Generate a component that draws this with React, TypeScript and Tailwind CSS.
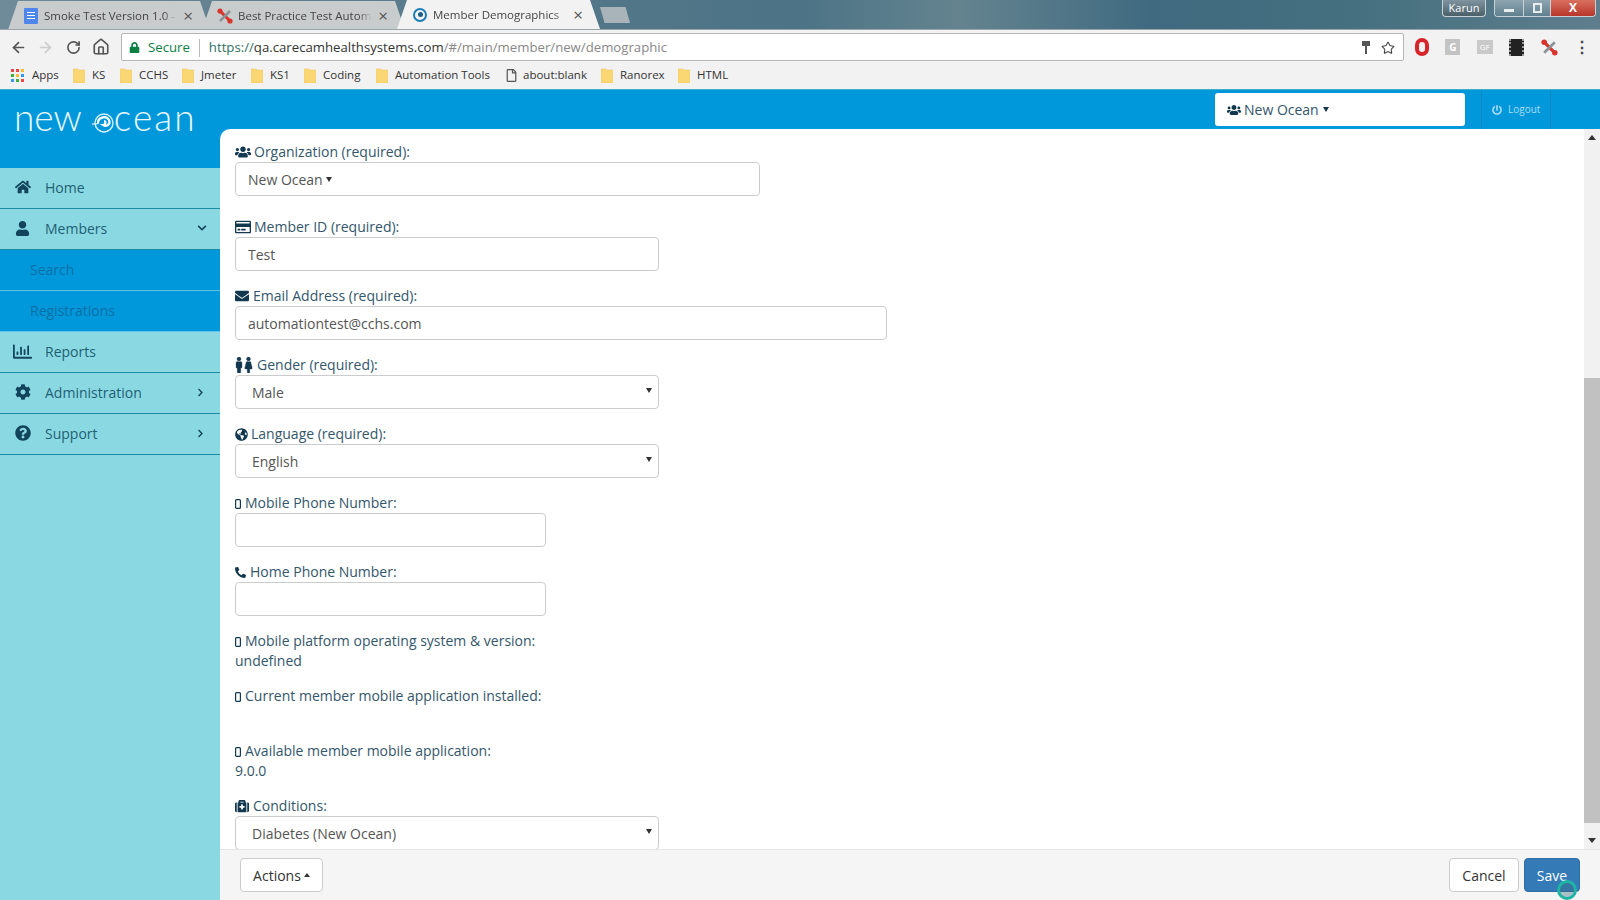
import type { ReactNode } from "react";
import { ArrowLeft, ArrowRight, House, RotateCw, Star } from "lucide-react";
import {
  FaChevronDown,
  FaChevronRight,
  FaCog,
  FaEnvelope,
  FaFemale,
  FaGlobeAmericas,
  FaHome,
  FaMale,
  FaMedkit,
  FaPhoneAlt,
  FaPowerOff,
  FaQuestionCircle,
  FaRegChartBar,
  FaRegCreditCard,
  FaRegFile,
  FaUser,
  FaUsers,
  FaLock,
} from "react-icons/fa";

const bookmarks = [
  { name: "KS", width: "w-[47px]" },
  { name: "CCHS", width: "w-[62px]" },
  { name: "Jmeter", width: "w-[69px]" },
  { name: "KS1", width: "w-[53px]" },
  { name: "Coding", width: "w-[72px]" },
  { name: "Automation Tools", width: "w-[130px]" },
];

// Small phone outline used beside the mobile labels
const MobileIcon = () => (
  <svg width="6" height="10" viewBox="0 0 6 10" className="inline-block mr-[4px] align-[-1px]">
    <rect x="0.6" y="0.6" width="4.8" height="8.8" rx="1" fill="none" stroke="#12384f" strokeWidth="1.2" />
  </svg>
);

const Folder = () => (
  <svg width="12" height="15" viewBox="0 0 12 15" className="shrink-0">
    <path d="M0 1h5l1 1h6v13H0z" fill="#fbd774" stroke="#e9c35d" strokeWidth="0.5" />
  </svg>
);

const Caret = ({ up }: { up?: boolean }) => (
  <span
    className={`inline-block w-0 h-0 border-x-[3px] border-x-transparent align-middle ${
      up ? "border-b-[4px] border-b-current" : "border-t-[5px] border-t-current"
    }`}
  />
);

// Scrollbar arrows are a bit wider than the dropdown carets
const ScrollArrow = ({ up }: { up?: boolean }) => (
  <span
    className={`inline-block w-0 h-0 border-x-[4px] border-x-transparent ${
      up ? "border-b-[5px] border-b-current" : "border-t-[5px] border-t-current"
    }`}
  />
);

const Swirl = () => (
  <svg width="22" height="24" viewBox="0 0 22 24" className="inline-block align-[-4px]">
    <path d="M0 13 H5" stroke="#e8f8fe" strokeWidth="1.2" />
    <circle cx="12" cy="12" r="9" fill="none" stroke="#d5f1fb" strokeWidth="1.4" />
    <path d="M6 13 A6 6 0 0 1 17 9 A4 4 0 0 1 11 14 C14 14 14 10 12 10" fill="none" stroke="#ffffff" strokeWidth="2.2" />
  </svg>
);

const Tab = ({
  title,
  icon,
  active,
  width,
}: {
  title: string;
  icon: ReactNode;
  active?: boolean;
  width: string;
}) => (
  <div
    className={`${width} h-[29px] -mr-[8px] pl-[15px] pr-[17px] flex items-center [clip-path:polygon(10px_0,calc(100%-10px)_0,100%_100%,0_100%)] ${
      active ? "bg-[#f2f2f2] relative z-10" : "bg-[#c9cccc] mt-[1px] h-[27px]"
    }`}
  >
    <span className="w-[16px] h-[16px] shrink-0 mr-[5px] flex items-center justify-center">{icon}</span>
    <span className="flex-1 overflow-hidden whitespace-nowrap text-[11.5px] text-[#444] [mask-image:linear-gradient(90deg,#000_90%,transparent)]">
      {title}
    </span>
    <span className="ml-[6px] text-[17px] leading-none text-[#555]">×</span>
  </div>
);

const Tools = ({ size = 16 }: { size?: number }) => (
  <svg width={size} height={size} viewBox="0 0 16 16">
    <path d="M3 3 L13 13" stroke="#d8342b" strokeWidth="3" />
    <path d="M13 3 L3 13" stroke="#8d9296" strokeWidth="2.5" />
    <circle cx="3" cy="3" r="2.6" fill="#d8342b" />
    <circle cx="13" cy="13" r="2.6" fill="#d8342b" />
  </svg>
);

const NavItem = ({
  icon,
  label,
  chevron,
}: {
  icon: ReactNode;
  label: string;
  chevron?: "down" | "right";
}) => (
  <div className="h-[41px] pb-[2px] flex items-center border-b border-[#1b8aa5] text-[14px] text-[#1f5f74] relative">
    <span className="w-[45px] pl-[15px] text-[#12455c] text-[16px] flex items-center">{icon}</span>
    <span>{label}</span>
    {chevron === "down" && <FaChevronDown className="absolute right-[13px] text-[10px] text-[#12455c]" />}
    {chevron === "right" && <FaChevronRight className="absolute right-[15px] text-[9px] text-[#12455c]" />}
  </div>
);

const SubItem = ({ label }: { label: string }) => (
  <div className="h-[41px] pb-[2px] flex items-center pl-[30px] bg-[#0098db] border-b border-[#5cc3ea] text-[14px] text-[#0a6fa5]">
    {label}
  </div>
);

const Label = ({ icon, text, gap = "mr-[4px]" }: { icon: ReactNode; text: string; gap?: string }) => (
  <div className="h-[20px] leading-[20px] flex items-center text-[14px] text-[#33566b] whitespace-nowrap">
    <span className={`text-[#12384f] flex items-center ${gap}`}>{icon}</span>
    {text}
  </div>
);

const TextInput = ({ value = "", width }: { value?: string; width: string }) => (
  <input
    readOnly
    value={value}
    className={`block h-[34px] ${width} rounded border border-[#ccc] bg-white px-[12px] text-[14px] text-[#555] outline-none`}
  />
);

const SelectBox = ({ value }: { value: string }) => (
  <div className="relative w-[424px] h-[34px]">
    <select
      defaultValue={value}
      className="block w-full h-full appearance-none rounded border border-[#ccc] bg-white pl-[16px] text-[14px] text-[#555] outline-none"
    >
      <option>{value}</option>
    </select>
    <span className="absolute right-[7px] top-[13px] text-[#333] leading-none flex">
      <Caret />
    </span>
  </div>
);

const InfoRow = ({ text, value }: { text: string; value?: string }) => (
  <div className="h-[40px] mb-[15px] text-[14px] leading-[20px] text-[#33566b]">
    <div className="whitespace-nowrap">
      <MobileIcon />
      {text}
    </div>
    <div>{value}</div>
  </div>
);

export default function App() {
  return (
    <div className="w-[1600px] h-[900px] overflow-hidden flex flex-col font-['Open_Sans',sans-serif]">
      {/* Browser tab strip */}
      <div className="h-[29px] shrink-0 flex pl-[8px] bg-[linear-gradient(90deg,#6f8a99_0%,#55788a_30%,#4c7486_50%,#64838f_60%,#3f6a80_72%,#45707f_85%,#5e7e8e_100%)] relative">
        <Tab
          width="w-[202px]"
          title="Smoke Test Version 1.0 -"
          icon={
            <span className="w-[14px] h-[16px] bg-[#4f86ec] rounded-[1px] flex flex-col gap-[2px] justify-center px-[3px]">
              <span className="h-[1px] bg-white" />
              <span className="h-[1px] bg-white" />
              <span className="h-[1px] bg-white" />
            </span>
          }
        />
        <Tab width="w-[203px]" title="Best Practice Test Autom" icon={<Tools />} />
        <Tab
          active
          width="w-[203px]"
          title="Member Demographics"
          icon={
            <span className="w-[14px] h-[14px] rounded-full border-[2px] border-[#1a7fb8] flex items-center justify-center">
              <span className="w-[5px] h-[5px] rounded-full bg-[#1a5f88]" />
            </span>
          }
        />
        <div className="w-[30px] h-[16px] mt-[7px] ml-[8px] bg-[#a9b4ba] [clip-path:polygon(0_0,85%_0,100%_100%,15%_100%)]" />
        {/* Window controls */}
        <div className="ml-auto flex items-start pr-[4px] text-[11px] text-white">
          <div className="w-[44px] h-[17px] rounded-b border border-[#c8d2d6] border-t-0 bg-[linear-gradient(180deg,#7f949e,#4b5f69)] text-center leading-[15px] mr-[8px]">
            Karun
          </div>
          <div className="w-[102px] h-[17px] flex rounded-b border border-[#c8d2d6] border-t-0 overflow-hidden">
            <div className="w-[28px] bg-[linear-gradient(180deg,#8ea5b0,#60808f)] flex items-end justify-center pb-[4px]">
              <span className="w-[10px] h-[3px] bg-[#e8eef0]" />
            </div>
            <div className="w-[27px] bg-[linear-gradient(180deg,#8ea5b0,#60808f)] border-l border-[#c8d2d6] flex items-center justify-center">
              <span className="w-[9px] h-[10px] border-[2px] border-[#e8eef0]" />
            </div>
            <div className="flex-1 bg-[linear-gradient(180deg,#d9705f,#b8352a)] border-l border-[#c8d2d6] text-center font-bold leading-[15px] text-[12px]">
              X
            </div>
          </div>
        </div>
      </div>

      {/* Address bar */}
      <div className="h-[32px] shrink-0 bg-[#f2f2f2] border-t border-[#9aa5aa] flex items-center pt-[3px] text-[#555] relative z-20">
        <div className="w-[121px] flex items-center pl-[10px]">
          <ArrowLeft size={17} strokeWidth={2.4} />
          <ArrowRight size={17} strokeWidth={2.4} className="text-[#ccc] ml-[10px]" />
          <RotateCw size={15} strokeWidth={2.6} className="ml-[12px]" />
          <House size={18} strokeWidth={2.2} className="ml-[11px]" />
        </div>
        <div className="w-[1283px] h-[28px] bg-white border border-[#b5b5b5] rounded-[2px] flex items-center pl-[7px] pr-[8px] pt-[1px] text-[13.2px]">
          <FaLock className="text-[11px] text-[#0b8043]" />
          <span className="text-[#0b8043] ml-[8px]">Secure</span>
          <span className="w-px h-[18px] bg-[#bbb] ml-[9px] mr-[9px]" />
          <span className="text-[#2f6f5f]">https://</span>
          <span className="text-[#333]">qa.carecamhealthsystems.com</span>
          <span className="text-[#888]">/#/main/member/new/demographic</span>
          <span className="ml-auto flex items-center gap-[11px] text-[#444]">
            <svg width="8" height="14" viewBox="0 0 8 14">
              <path d="M0 0h8v5H5v8H3V5H0z" fill="#555" />
            </svg>
            <Star size={14} strokeWidth={1.8} />
          </span>
        </div>
        <div className="flex-1 flex items-center justify-between pl-[11px] pr-[10px]">
          <span className="w-[14px] h-[18px] rounded-full border-[4px] border-[#d8252b]" />
          <span className="w-[15px] h-[16px] bg-[#c3c3c3] text-white text-[10px] font-bold text-center leading-[16px]">G</span>
          <span className="w-[16px] h-[14px] bg-[#c9c9c9] text-white text-[8px] text-center leading-[14px]">GF</span>
          <span className="w-[15px] h-[17px] bg-[#222] border-x-[2px] border-dotted border-[#999]" />
          <Tools size={17} />
          <span className="text-[#444] text-[16px] font-bold leading-none">⋮</span>
        </div>
      </div>

      {/* Bookmarks */}
      <div className="h-[28px] shrink-0 bg-[#f2f2f2] flex items-center pl-[11px] text-[11.5px] text-[#333]">
        <span className="grid grid-cols-3 gap-[2px] w-[13px] mr-[8px]">
          {["#e44", "#e44", "#fb3", "#4a4", "#fb3", "#39e", "#39e", "#4a4", "#e44"].map((c, i) => (
            <span key={i} className="w-[3px] h-[3px]" style={{ backgroundColor: c }} />
          ))}
        </span>
        <span className="w-[41px]">Apps</span>
        {bookmarks.map((b) => (
          <span key={b.name} className={`flex items-center gap-[7px] ${b.width}`}>
            <Folder />
            {b.name}
          </span>
        ))}
        <span className="flex items-center gap-[5px] w-[95px]">
          <FaRegFile className="text-[13px] text-[#555] -ml-[1px]" />
          about:blank
        </span>
        <span className="flex items-center gap-[7px] w-[77px]">
          <Folder />
          Ranorex
        </span>
        <span className="flex items-center gap-[7px]">
          <Folder />
          HTML
        </span>
      </div>

      {/* App body */}
      <div className="flex-1 min-h-0 flex border-t border-[#3fb0c9]">
        <aside className="w-[220px] shrink-0 bg-[#8ad9e2] flex flex-col">
          <div className="h-[78px] bg-[#0098db] pl-[14px] pt-[3px] text-[37px] leading-[48px] font-light text-[#e8f8fe] font-['Lato',sans-serif] whitespace-nowrap">
            new
            <span className="ml-[10px]">
              <Swirl />
            </span>
            <span className="tracking-[2px]">cean</span>
          </div>
          <NavItem icon={<FaHome />} label="Home" />
          <NavItem icon={<FaUser className="text-[15px]" />} label="Members" chevron="down" />
          <SubItem label="Search" />
          <SubItem label="Registrations" />
          <NavItem icon={<FaRegChartBar className="text-[19px] -ml-[2px]" />} label="Reports" />
          <NavItem icon={<FaCog />} label="Administration" chevron="right" />
          <NavItem icon={<FaQuestionCircle />} label="Support" chevron="right" />
        </aside>

        <div className="flex-1 min-w-0 bg-[#0098db] flex flex-col">
          {/* Top bar */}
          <div className="h-[39px] shrink-0 flex items-center justify-end pr-[49px]">
            <div className="w-[250px] h-[33px] mr-[16px] bg-white rounded-[3px] flex items-center pl-[12px] text-[14px] text-[#33566b]">
              <FaUsers className="text-[14px] text-[#12384f] mr-[3px]" />
              New Ocean
              <span className="ml-[4px] flex text-[#12384f]">
                <Caret />
              </span>
            </div>
            <div className="w-[70px] h-[39px] border-x border-[#1287bf] flex items-center pl-[10px] text-[10px] text-[#a9def5]">
              <FaPowerOff className="text-[10px] mr-[6px]" />
              Logout
            </div>
          </div>

          <div className="flex-1 min-h-0 bg-white rounded-tl-[10px] flex flex-col overflow-hidden">
            <div className="flex-1 min-h-0 flex">
              {/* Form */}
              <div className="flex-1 min-w-0 overflow-hidden pl-[15px] pt-[13px]">
                <Label icon={<FaUsers className="text-[16px]" />} text="Organization (required):" gap="mr-[3px]" />
                <div className="w-[525px] h-[34px] mb-[21px] rounded border border-[#ccc] flex items-center pl-[12px] text-[14px] text-[#555]">
                  New Ocean
                  <span className="ml-[3px] flex text-[#333]">
                    <Caret />
                  </span>
                </div>
                <Label icon={<FaRegCreditCard className="text-[16px]" />} text="Member ID (required):" gap="mr-[3px]" />
                <div className="mb-[15px]">
                  <TextInput value="Test" width="w-[424px]" />
                </div>
                <Label icon={<FaEnvelope className="text-[14px]" />} text="Email Address (required):" />
                <div className="mb-[15px]">
                  <TextInput value="automationtest@cchs.com" width="w-[652px]" />
                </div>
                <Label
                  icon={
                    <>
                      <FaMale className="w-[8px] h-[16px] mr-[1px] [stroke-width:10px]" />
                      <FaFemale className="w-[9px] h-[16px] [stroke-width:10px]" />
                    </>
                  }
                  text="Gender (required):"
                  gap="mr-[4px]"
                />
                <div className="mb-[15px]">
                  <SelectBox value="Male" />
                </div>
                <Label icon={<FaGlobeAmericas className="text-[13px]" />} text="Language (required):" gap="mr-[3px]" />
                <div className="mb-[15px]">
                  <SelectBox value="English" />
                </div>
                <div className="h-[20px] leading-[20px] text-[14px] text-[#33566b]">
                  <MobileIcon />
                  Mobile Phone Number:
                </div>
                <div className="mb-[15px]">
                  <TextInput width="w-[311px]" />
                </div>
                <Label icon={<FaPhoneAlt className="text-[11px]" />} text="Home Phone Number:" />
                <div className="mb-[15px]">
                  <TextInput width="w-[311px]" />
                </div>
                <InfoRow text="Mobile platform operating system & version:" value="undefined" />
                <InfoRow text="Current member mobile application installed:" />
                <InfoRow text="Available member mobile application:" value="9.0.0" />
                <Label icon={<FaMedkit className="text-[14px]" />} text="Conditions:" />
                <SelectBox value="Diabetes (New Ocean)" />
              </div>

              {/* Scrollbar */}
              <div className="w-[16px] shrink-0 bg-[#f1f1f1] flex flex-col items-center text-[#333] leading-none">
                <div className="h-[17px] flex items-center justify-center">
                  <ScrollArrow up />
                </div>
                <div className="h-[232px]" />
                <div className="w-full flex-1 bg-[#c1c1c1]" />
                <div className="h-[9px]" />
                <div className="h-[17px] flex items-center justify-center">
                  <ScrollArrow />
                </div>
              </div>
            </div>

            {/* Footer actions */}
            <div className="h-[51px] shrink-0 bg-[#f5f5f5] border-t border-[#e5e5e5] flex items-center pl-[20px] pr-[20px] text-[14px]">
              <button className="w-[83px] h-[34px] bg-white border border-[#ccc] rounded text-[#333] flex items-center justify-center gap-[3px]">
                Actions
                <Caret up />
              </button>
              <button className="ml-auto w-[70px] h-[34px] bg-white border border-[#ccc] rounded text-[#333]">
                Cancel
              </button>
              <button className="relative ml-[5px] w-[56px] h-[34px] bg-[#337ab7] border border-[#2e6da4] rounded text-white">
                Save
                <span className="absolute left-[32px] top-[21px] w-[20px] h-[20px] rounded-full border-[3px] border-[#1fb5a5] bg-[#3a6e80]/40" />
              </button>
            </div>
          </div>
        </div>
      </div>
    </div>
  );
}
